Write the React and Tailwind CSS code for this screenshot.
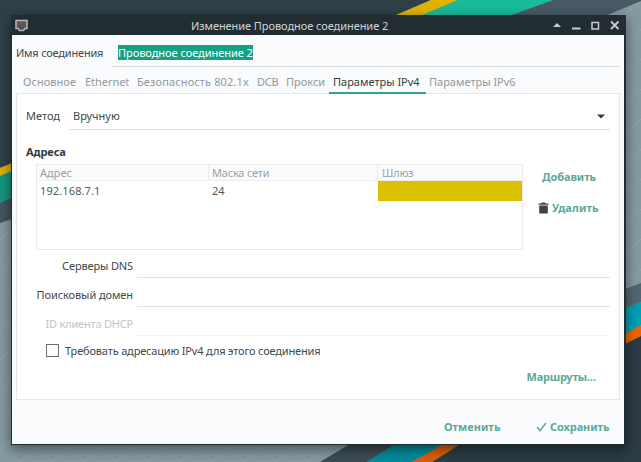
import React from "react";

const TABS = [
  { label: "Основное", cls: "w-[53px] ml-[11px] tracking-[0.05px]" },
  { label: "Ethernet", cls: "w-[45px] ml-[9px] tracking-[-0.05px]" },
  { label: "Безопасность 802.1x", cls: "w-[112px] ml-[7px] tracking-[0.12px]" },
  { label: "DCB", cls: "w-[22px] ml-[8px] tracking-[-0.2px]" },
  { label: "Прокси", cls: "w-[40px] ml-[7px]" },
  { label: "Параметры IPv4", cls: "w-[97px] ml-[3px] pl-[4px]", active: true },
  { label: "Параметры IPv6", cls: "w-[88px] ml-[3px]" },
];

function Wallpaper() {
  return (
    <svg className="absolute inset-0" width="641" height="462" viewBox="0 0 641 462">
      <defs>
        <pattern id="hatch" width="32" height="30" patternUnits="userSpaceOnUse">
          <path d="M0 30 32 0" stroke="#a3b2b6" strokeWidth="0.8" opacity="0.5" />
        </pattern>
      </defs>
      <rect width="641" height="462" fill="#859aa1" />
      <rect width="641" height="462" fill="url(#hatch)" />
      <path d="M0 0H431L396 15V100H11V164L0 168Z" fill="#2f4049" />
      <path d="M431 0H458L420 16H394Z" fill="#e0b400" />
      <path d="M458 0H553L509 16H420Z" fill="#1abc9c" />
      <path d="M553 0H641V1L605 16H509Z" fill="#485a65" />
      <path d="M0 168 12 163V171L0 176Z" fill="#dcae05" />
      <path d="M0 176 12 171V197L0 203Z" fill="#15967c" />
      <path d="M0 203 12 197V219L0 223Z" fill="#44545e" />
      <path d="M625 289 641 283V302L625 309Z" fill="#526772" />
      <path d="M625 309 641 302V325L625 334Z" fill="#00a0b4" />
      <path d="M625 334 641 325V336L625 344Z" fill="#f26400" />
      <path d="M625 344 641 336V462H432L460 444H625Z" fill="#2c3c44" />
      <path d="M350 444H396L367 462H320Z" fill="#3c4c55" />
      <path d="M396 444H444L412 462H367Z" fill="#008c99" />
      <path d="M444 444H460L432 462H412Z" fill="#dc5d08" />
    </svg>
  );
}

function TitleBar() {
  return (
    <div className="relative flex h-5 items-center bg-[#222d32] pl-[3px]">
      <svg width="14" height="14" viewBox="0 0 14 14">
        <path d="M1 2.5H12V10.5H10L8.500 12.500H4.500L3 10.500H1Z" fill="#4f5557" stroke="#b4b7b8" strokeWidth="1.500" />
        <path d="M3.500 3.500v4M5.500 3.500v4M7.500 3.500v4M9.500 3.500v4" stroke="#6b5f5a" strokeWidth="1" />
      </svg>
      <div className="ml-[162px] w-[200px] whitespace-nowrap text-[11px] leading-5 tracking-[-0.065px] text-[#cfd4d6]">
        <span className="relative top-px">Изменение Проводное соединение 2</span>
      </div>
      <svg className="ml-auto" width="72" height="20" viewBox="0 0 72 20" fill="none">
        <path d="M1 12 5 8 9 12Z" fill="#c8cccd" />
        <path d="M20 13.500H28.500" stroke="#c8cccd" strokeWidth="2" />
        <rect x="40" y="7.500" width="6.500" height="6.500" stroke="#c8cccd" strokeWidth="1.500" />
        <path d="M59 6.500 66.500 14M66.500 6.500 59 14" stroke="#c8cccd" strokeWidth="1.800" />
      </svg>
    </div>
  );
}

function Field({ label, textCls, disabled }) {
  return (
    <div className="flex h-[29px] items-stretch">
      <div className={"w-[116px] pt-[9px] text-right leading-[14px] " + textCls}>{label}</div>
      <div className={"ml-[4px] mr-[9px] h-[28px] flex-1 border-b " + (disabled ? "border-[#f3f4f4]" : "border-[#dfe1e3]")} />
    </div>
  );
}

export default function App() {
  return (
    <div className="relative h-[462px] w-[641px] overflow-hidden pl-[11px] pt-[15px] font-['Noto_Sans','Open_Sans',sans-serif] text-[11px]">
      <Wallpaper />
      <div className="relative h-[430px] w-[615px] bg-[#222d32] pb-px pl-px pr-[2px] shadow-[0_4px_12px_rgba(0,0,0,0.5)]">
        <TitleBar />
        <div className="flex h-[409px] flex-col whitespace-nowrap bg-[#fafbfc] text-[#41494c]">
          <div className="flex h-8 shrink-0 pl-1">
            <div className="w-[96px] pt-[10px] leading-4 tracking-[-0.2px]">Имя соединения</div>
            <div className="mr-[4px] flex-1 border-b border-[#dcdfe1] pl-[6px] pt-[10px]">
              <span className="block h-[15px] w-[135px] bg-[#16a085] leading-[16px] tracking-[-0.04px] text-white">Проводное соединение 2</span>
            </div>
          </div>
          <div className="flex h-[26px] shrink-0 text-[#92999c]">
            {TABS.map((t) => (
              <div key={t.label} className={"h-[27px] shrink-0 pt-[7px] leading-4 " + t.cls + (t.active ? " z-10 border-b-2 border-[#2da58c] text-[#353d40]" : "")}>
                {t.label}
              </div>
            ))}
          </div>
          <div className="ml-1 mr-[4px] flex h-[307px] shrink-0 flex-col border border-[#e6e8ea] bg-white">
            <div className="flex h-[36px] shrink-0 pl-[9px]">
              <div className="w-[43px] pt-[14px] leading-4">Метод</div>
              <div className="mr-[9px] flex flex-1 justify-between border-b border-[#dcdfe1] pl-[4px] pr-[5px] pt-[14px] leading-4">
                Вручную
                <svg className="mt-[6px]" width="8" height="5" viewBox="0 0 8 5"><path d="M0 .5H8L4 4.500Z" fill="#353b3e" /></svg>
              </div>
            </div>
            <div className="h-[34px] shrink-0 pl-[9px] pt-[14px] font-bold leading-4 tracking-[-0.1px] text-[#30383b]">Адреса</div>
            <div className="flex h-[86px] shrink-0 pl-[19px]">
              <div className="h-[86px] w-[487px] border border-[#e8eaec]">
                <div className="grid h-4 grid-cols-[172px_169px_144px] border-b border-[#eceef0] bg-[#fafbfc] leading-[16px] text-[#9ba2a5]">
                  <div className="border-r border-[#e8eaec] pl-[3px]">Адрес</div>
                  <div className="border-r border-[#e8eaec] pl-[3px] tracking-[-0.2px]">Маска сети</div>
                  <div className="pl-[4px] tracking-[-0.1px]">Шлюз</div>
                </div>
                <div className="grid h-5 grid-cols-[172px_169px_144px] leading-[20px] text-[#515a5d]">
                  <div className="pl-[3px] tracking-[0.12px]">192.168.7.1</div>
                  <div className="pl-[3px]">24</div>
                  <div className="bg-[#dcbf00]" />
                </div>
              </div>
              <div className="ml-[15px] font-bold text-[#5ca99b]">
                <div className="pl-[4px] pt-[5px] leading-4 tracking-[-0.1px]">Добавить</div>
                <div className="flex items-center pt-[15px] leading-4">
                  <svg className="mr-[3px]" width="11" height="12" viewBox="0 0 11 12" fill="#3e4346">
                    <path d="M.500 1.500H3.500V.500H7.500V1.500H10.500V2.700H.500ZM1.200 3.500H9.800V11.500H1.200Z" />
                  </svg>
                  <span className="tracking-[0.1px]">Удалить</span>
                </div>
              </div>
            </div>
            <div className="h-[87px] shrink-0">
              <Field label="Серверы DNS" textCls="text-[#41494c] tracking-[-0.13px]" />
              <Field label="Поисковый домен" textCls="text-[#41494c] tracking-[-0.08px]" />
              <Field label="ID клиента DHCP" textCls="text-[#c2c5c7] tracking-[-0.2px]" disabled />
            </div>
            <div className="flex h-[32px] shrink-0 pl-[29px] pt-[6px] leading-4">
              <div className="mt-[1px] h-[13px] w-[13px] border-[1.500px] border-[#686e71]" />
              <div className="ml-[6px] tracking-[-0.165px]">Требовать адресацию IPv4 для этого соединения</div>
            </div>
            <div className="mr-[23px] text-right font-bold leading-4 tracking-[-0.25px] text-[#5ca99b]">Маршруты…</div>
          </div>
          <div className="flex h-[44px] shrink-0 items-center pl-[432px] pt-[9px] font-bold text-[#5ca99b]">
            <div className="w-[92px] pt-px">Отменить</div>
            <svg className="mr-[3px]" width="11" height="10" viewBox="0 0 11 10" fill="none">
              <path d="M1 5 4 8.500 10 1" stroke="#5ca99b" strokeWidth="1.500" />
            </svg>
            <div className="pt-px tracking-[-0.1px]">Сохранить</div>
          </div>
        </div>
      </div>
    </div>
  );
}
